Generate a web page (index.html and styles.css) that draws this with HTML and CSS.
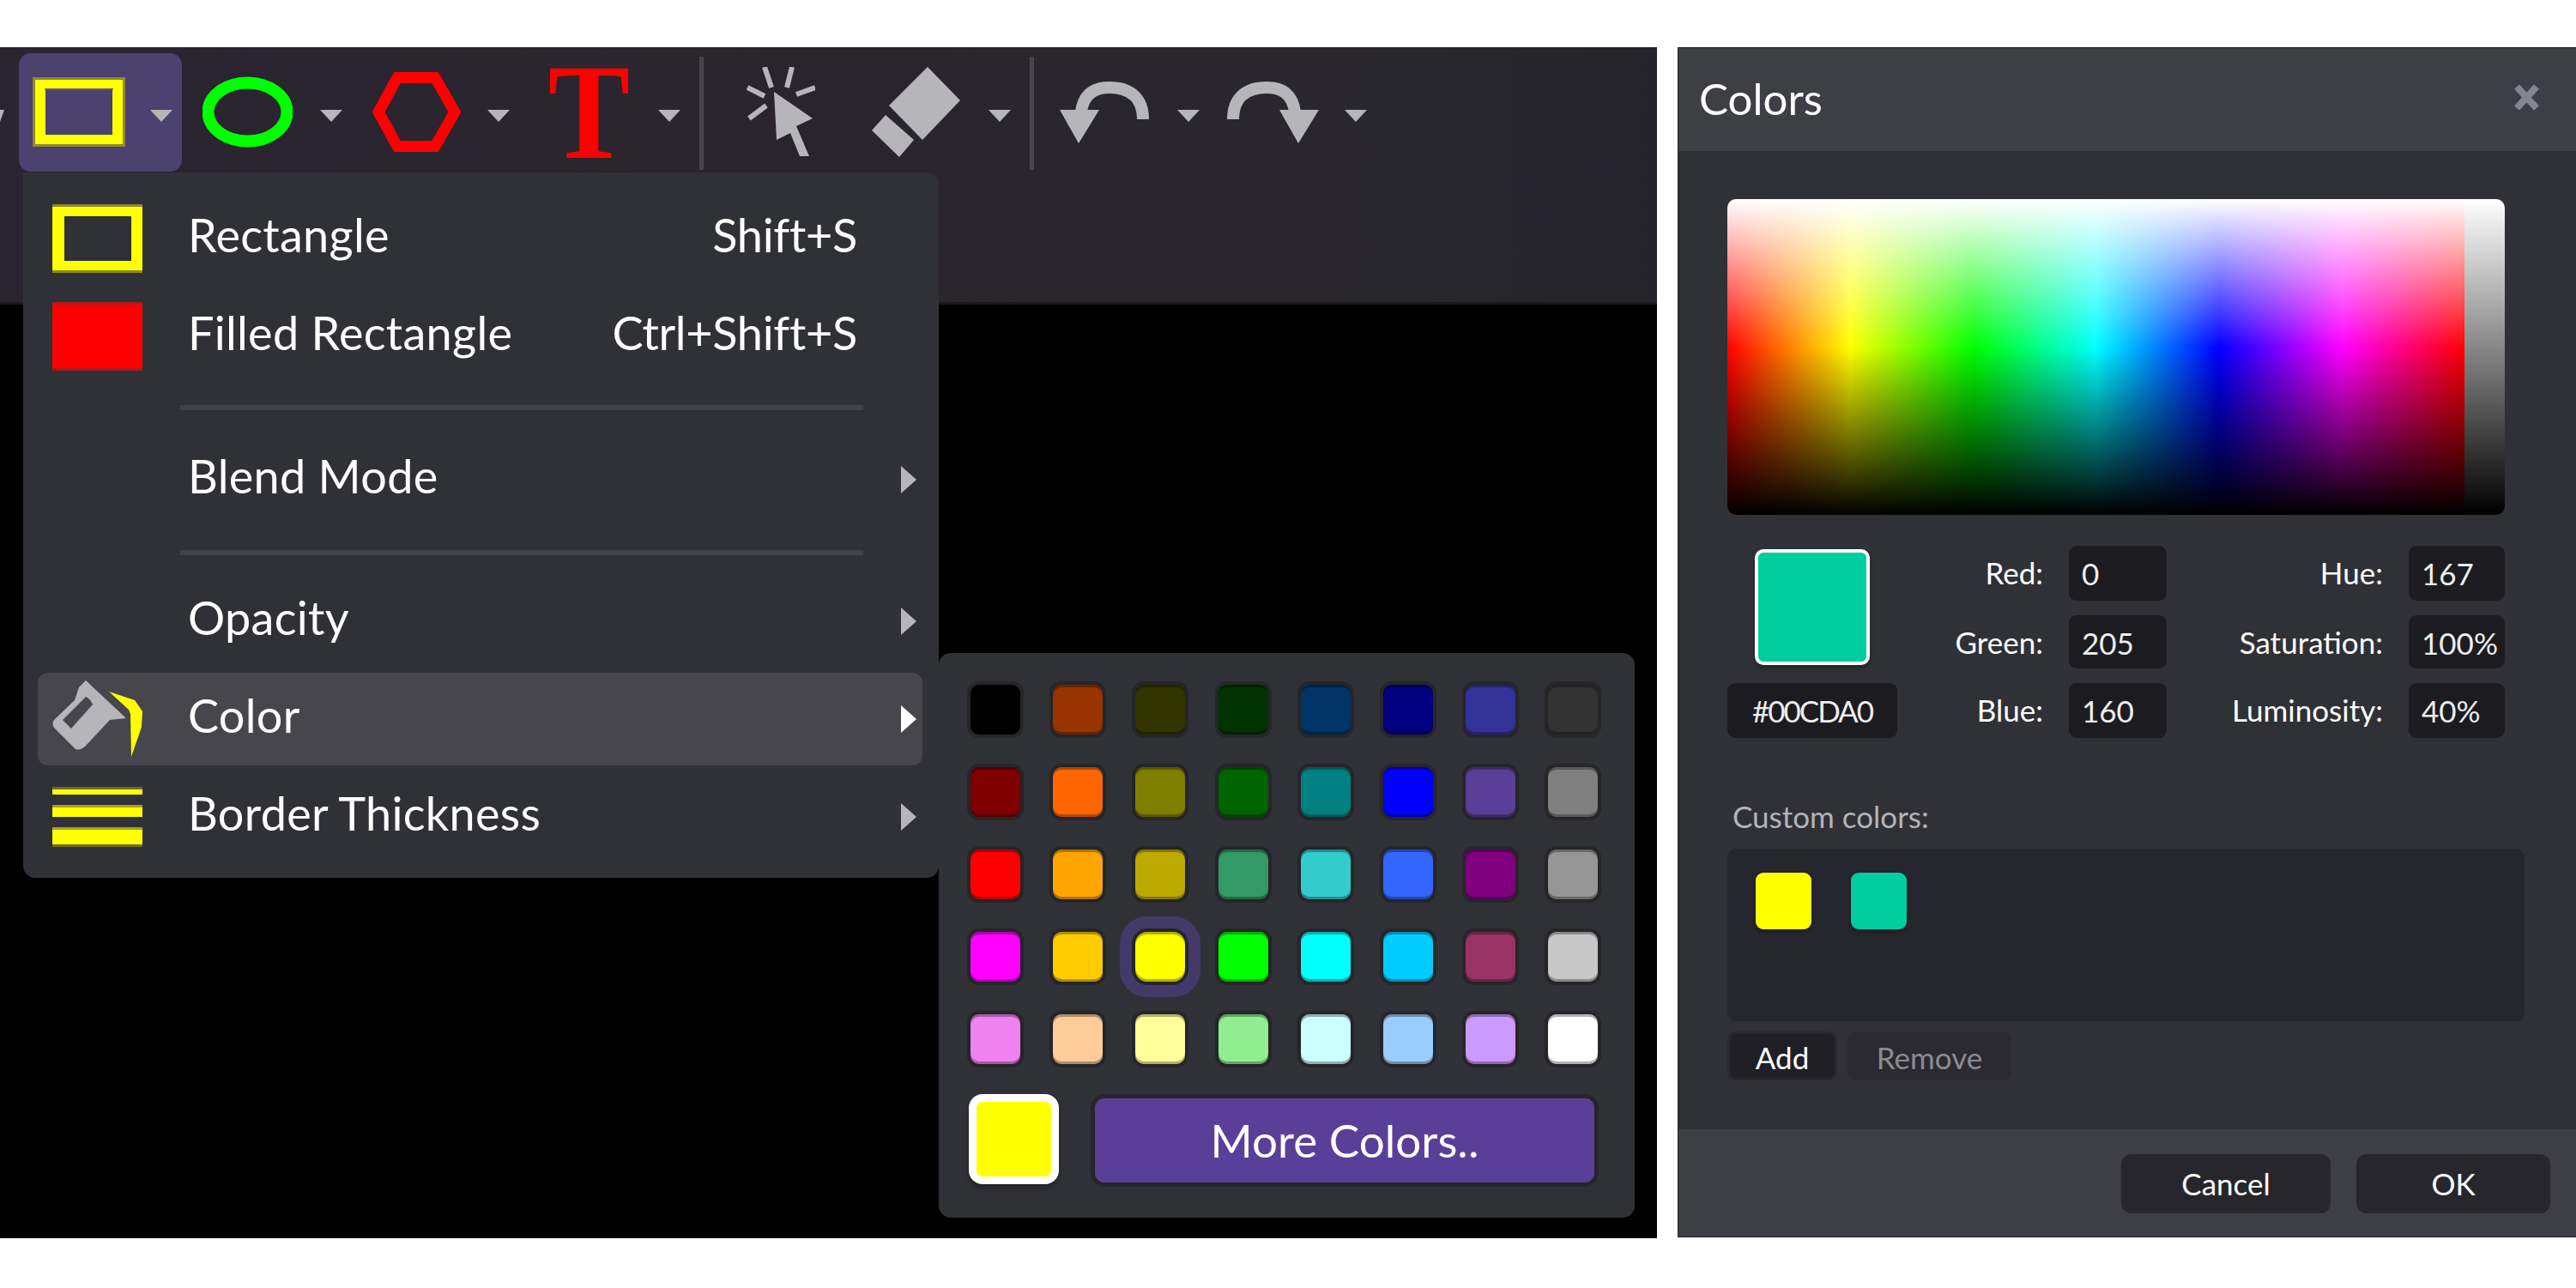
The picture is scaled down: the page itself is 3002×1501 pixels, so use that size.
FILE: index.html
```html
<!DOCTYPE html>
<html lang="en">
<head>
<meta charset="utf-8">
<title>Colors</title>
<link rel="stylesheet" href="styles.css">
</head>
<body>
<div class="page">
  <section class="editor">
    <div class="toolbar">
      <svg class="sliver" viewBox="0 0 5 14"><polygon class="gray" points="-8,0 5,0 0,14"/></svg>
      <div class="tool-active">
        <svg class="ic w108" viewBox="38 78 108 105">
          <path fill="#8c8a30" fill-rule="evenodd" d="M38 90H146V171H38ZM53 104V157H131V104Z"/>
          <path fill="#ffff00" fill-rule="evenodd" d="M41 93H143V168H41ZM53 104V157H131V104Z"/>
          <rect x="52" y="103" width="80" height="1.5" fill="#6f6860"/>
        </svg>
        <svg class="drop in-active" viewBox="0 0 26 14"><polygon class="gray" points="0,0 26,0 13,14"/></svg>
      </div>
      <svg class="ic w105 ell" viewBox="236 78 105 105"><ellipse cx="288.5" cy="130.5" rx="46" ry="34" class="line-g"/></svg>
      <svg class="drop d32" viewBox="0 0 26 14"><polygon class="gray" points="0,0 26,0 13,14"/></svg>
      <svg class="ic w103 m35" viewBox="435 78 103 105"><polygon points="464,90.5 508,90.5 531,130.5 508,170.5 464,170.5 442,130.5" class="line-r"/></svg>
      <svg class="drop d31" viewBox="0 0 26 14"><polygon class="gray" points="0,0 26,0 13,14"/></svg>
      <span class="tool-t">T</span>
      <svg class="drop d38" viewBox="0 0 26 14"><polygon class="gray" points="0,0 26,0 13,14"/></svg>
      <div class="vsep s22"></div>
      <svg class="ic w80 m50" viewBox="870 78 80 105">
        <polygon class="gray" points="902,107 947,138 928,147 943,182 932,182 921,155 905,163"/>
        <g class="ray"><line x1="891" y1="78" x2="899" y2="102"/><line x1="923" y1="78" x2="917" y2="102"/><line x1="871" y1="102" x2="891" y2="112"/><line x1="950" y1="102" x2="928" y2="110"/><line x1="893" y1="123" x2="873" y2="138"/></g>
      </svg>
      <svg class="ic w103 m66" viewBox="1016 78 103 105">
        <polygon class="gray" points="1081,78 1119,117 1075,163 1036,123"/>
        <polygon class="gray" points="1032,134 1065,163 1048,183 1016,152"/>
      </svg>
      <svg class="drop d33" viewBox="0 0 26 14"><polygon class="gray" points="0,0 26,0 13,14"/></svg>
      <div class="vsep s22"></div>
      <svg class="ic w104 m30" viewBox="1235 78 104 105">
        <path class="arc" d="M1332 139C1332 115 1318 102 1293 102C1275 102 1263 110 1260 130"/>
        <polygon class="gray" points="1235,128 1281,128 1257,167"/>
      </svg>
      <svg class="drop d33" viewBox="0 0 26 14"><polygon class="gray" points="0,0 26,0 13,14"/></svg>
      <svg class="ic w107 m32" viewBox="1429 78 107 105">
        <path class="arc" d="M1436 139C1436 115 1450 102 1475 102C1493 102 1505 110 1508 130"/>
        <polygon class="gray" points="1490,128 1536,128 1512,167"/>
      </svg>
      <svg class="drop d30" viewBox="0 0 26 14"><polygon class="gray" points="0,0 26,0 13,14"/></svg>
    </div>
    <div class="canvas"></div>

    <div class="menu">
      <div class="row">
        <svg class="mi" viewBox="0 0 105 80">
          <path fill="#8c8a30" fill-rule="evenodd" d="M0 0H105V80H0ZM14 14V66H92V14Z"/>
          <path fill="#ffff00" fill-rule="evenodd" d="M0 3H105V77H0ZM14 14V66H92V14Z"/>
        </svg>
        <span class="label">Rectangle</span><span class="key">Shift+S</span>
      </div>
      <div class="row">
        <svg class="mi" viewBox="0 0 105 80"><rect width="105" height="80" fill="#ff0000"/><rect width="105" height="3" fill="#a81a20"/><rect y="77" width="105" height="3" fill="#a81a20"/></svg>
        <span class="label">Filled Rectangle</span><span class="key">Ctrl+Shift+S</span>
      </div>
      <div class="msep one"></div>
      <div class="row">
        <span class="mi"></span><span class="label">Blend Mode</span>
        <svg class="sub" viewBox="0 0 18 32"><polygon class="gray" points="0,0 18,16 0,32"/></svg>
      </div>
      <div class="msep two"></div>
      <div class="row">
        <span class="mi"></span><span class="label">Opacity</span>
        <svg class="sub" viewBox="0 0 18 32"><polygon class="gray" points="0,0 18,16 0,32"/></svg>
      </div>
      <div class="row hover">
        <svg class="mi tall" viewBox="61 794 105 90">
          <path class="gray" fill-rule="evenodd" d="M100 794L147 838L128 840L99 871Q93 876 88 874L63 849Q60 844 63 840L87 817L92 802ZM100 813L73 840L83 850L108 822Q105 815 100 813Z"/>
          <path fill="#ffff00" d="M127 807L157 817L166 830L165 848L153 883L152 833L150 828Z"/>
        </svg>
        <span class="label">Color</span>
        <svg class="sub" viewBox="0 0 18 32"><polygon fill="#fff" points="0,0 18,16 0,32"/></svg>
      </div>
      <div class="row">
        <svg class="mi bars" viewBox="0 0 105 70">
          <rect y="0" width="105" height="3" fill="#6f6d24"/><rect y="3" width="105" height="6" fill="#ffff00"/>
          <rect y="21" width="105" height="3" fill="#a5a310"/><rect y="24" width="105" height="11" fill="#ffff00"/>
          <rect y="47" width="105" height="3" fill="#a5a310"/><rect y="50" width="105" height="17" fill="#ffff00"/><rect y="67" width="105" height="3" fill="#6f6d24"/>
        </svg>
        <span class="label">Border Thickness</span>
        <svg class="sub" viewBox="0 0 18 32"><polygon class="gray" points="0,0 18,16 0,32"/></svg>
      </div>
    </div>

    <div class="palette">
      <div class="swatches">
        <i class="sw" style="background:#000000"></i><i class="sw" style="background:#993300"></i><i class="sw" style="background:#333300"></i><i class="sw" style="background:#003300"></i><i class="sw" style="background:#003366"></i><i class="sw" style="background:#000080"></i><i class="sw" style="background:#333399"></i><i class="sw" style="background:#333333"></i>
        <i class="sw" style="background:#800000"></i><i class="sw" style="background:#ff6600"></i><i class="sw" style="background:#808000"></i><i class="sw" style="background:#006400"></i><i class="sw" style="background:#008080"></i><i class="sw" style="background:#0000ff"></i><i class="sw" style="background:#5a3f99"></i><i class="sw" style="background:#808080"></i>
        <i class="sw" style="background:#ff0000"></i><i class="sw" style="background:#ffa500"></i><i class="sw" style="background:#bdaa00"></i><i class="sw" style="background:#339966"></i><i class="sw" style="background:#33cccc"></i><i class="sw" style="background:#3366ff"></i><i class="sw" style="background:#800080"></i><i class="sw" style="background:#969696"></i>
        <i class="sw" style="background:#ff00ff"></i><i class="sw" style="background:#ffcc00"></i><i class="sw selected" style="background:#ffff00"></i><i class="sw" style="background:#00ff00"></i><i class="sw" style="background:#00ffff"></i><i class="sw" style="background:#00ccff"></i><i class="sw" style="background:#993366"></i><i class="sw" style="background:#c8c8c8"></i>
        <i class="sw" style="background:#ee82ee"></i><i class="sw" style="background:#ffcc99"></i><i class="sw" style="background:#ffff99"></i><i class="sw" style="background:#90ee90"></i><i class="sw" style="background:#ccffff"></i><i class="sw" style="background:#99ccff"></i><i class="sw" style="background:#cc99ff"></i><i class="sw" style="background:#ffffff"></i>
      </div>
      <div class="palette-foot">
        <div class="current"></div>
        <div class="more">More Colors..</div>
      </div>
    </div>
  </section>

  <section class="dialog">
    <header class="dlg-head">
      <span class="dlg-title">Colors</span>
      <svg class="close" viewBox="0 0 29 29"><path d="M3 2L26 27M26 2L3 27"/></svg>
    </header>
    <div class="dlg-body">
      <div class="picker"><div class="field"></div><div class="lum"></div></div>
      <div class="values">
        <div class="preview-cell"><div class="preview"></div></div>
        <label class="vl">Red:</label><div class="in">0</div>
        <label class="vl">Hue:</label><div class="in">167</div>
        <label class="vl">Green:</label><div class="in">205</div>
        <label class="vl">Saturation:</label><div class="in">100%</div>
        <div class="in hex">#00CDA0</div>
        <label class="vl">Blue:</label><div class="in">160</div>
        <label class="vl">Luminosity:</label><div class="in">40%</div>
      </div>
      <div class="custom-label">Custom colors:</div>
      <div class="custom">
        <i class="cc yellow"></i><i class="cc teal"></i>
      </div>
      <div class="custom-btns">
        <div class="btn add">Add</div>
        <div class="btn remove">Remove</div>
      </div>
    </div>
    <footer class="dlg-foot">
      <div class="btn2 cancel">Cancel</div>
      <div class="btn2 ok">OK</div>
    </footer>
  </section>
</div>
</body>
</html>
```
FILE: styles.css
```css
* { box-sizing: border-box; }
html, body { margin: 0; padding: 0; background: #fff; }
body { width: 3002px; height: 1501px; overflow: hidden; font-family: Lato, "Noto Sans", sans-serif; color: #fff; }
.page { display: flex; gap: 24px; padding-top: 55px; height: 1443px; }

/* left: editor */
.editor { position: relative; width: 1931px; height: 1388px; display: flex; flex-direction: column; background: #000; flex: none; }
.toolbar { height: 300px; flex: none; display: flex; align-items: flex-start; padding-top: 23px; border-bottom: 3px solid #19181c;
  background: linear-gradient(90deg, #292430 0%, #2a252d 50%, #29262e 80%, #25242d 100%); }
.canvas { flex: 1; background: #000; }
.gray { fill: #b5b5ba; }
.ic { height: 105px; flex: none; display: block; }
.w108 { width: 108px; } .w105 { width: 105px; } .w103 { width: 103px; } .w80 { width: 80px; } .w104 { width: 104px; } .w107 { width: 107px; }
.sliver { width: 5px; height: 14px; margin-top: 50px; margin-right: 17px; flex: none; }
.tool-active { width: 190px; height: 138px; margin-top: -16px; padding: 16px 0 0 16px; background: #4b4270; border-radius: 14px; display: flex; align-items: flex-start; flex: none; }
.drop { width: 26px; height: 14px; flex: none; margin-top: 50px; display: block; }
.in-active { margin-left: 29px; }
.ell { margin-left: 24px; }
.d32 { margin-left: 32px; } .d31 { margin-left: 31px; } .d38 { margin-left: 38px; } .d33 { margin-left: 33px; } .d30 { margin-left: 30px; }
.m35 { margin-left: 35px; } .m50 { margin-left: 50px; } .m66 { margin-left: 66px; } .m30 { margin-left: 30px; } .m32 { margin-left: 32px; }
.line-g { fill: none; stroke: #00ff00; stroke-width: 14; }
.line-r { fill: none; stroke: #ff0000; stroke-width: 13; }
.ray line { stroke: #b5b5ba; stroke-width: 6; }
.arc { fill: none; stroke: #b5b5ba; stroke-width: 14; }
.tool-t { width: 93px; height: 105px; margin-left: 40px; margin-right: 2px; flex: none; display: block; text-align: center; font: bold 159px/105px "Liberation Serif", serif; color: #ff0000; transform: scaleX(.9); }
.vsep { width: 5px; height: 132px; margin-top: -12px; background: #45454a; flex: none; }
.s22 { margin-left: 22px; }

/* shape menu */
.menu { position: absolute; left: 27px; top: 146px; width: 1067px; height: 822px; padding: 23px 19px 17px 17px; background: #303136; border-radius: 0 14px 14px 14px; display: flex; flex-direction: column; gap: 6px; }
.row { height: 108px; flex: none; display: flex; align-items: center; padding-left: 17px; border-radius: 12px; font-size: 54px; letter-spacing: .3px; line-height: 100px; padding-bottom: 8px; }
.row.hover { background: #47464c; }
.mi { width: 105px; height: 80px; flex: none; margin-right: 53px; display: block; margin-top: 8px; }
.mi.tall { height: 90px; }
.mi.bars { height: 70px; }
.key { margin-left: auto; padding-right: 76px; letter-spacing: -.3px; }
.sub { width: 18px; height: 32px; margin-left: auto; margin-right: 7px; flex: none; margin-top: 8px; }
.msep { height: 6px; width: 796px; margin-left: 166px; background: #414148; flex: none; }
.msep.one { margin-top: 20px; margin-bottom: 21px; }
.msep.two { margin-top: 22px; margin-bottom: 17px; }

/* color palette */
.palette { position: absolute; left: 1094px; top: 706px; width: 811px; height: 658px; padding: 33px 33px 0; background: #303136; border-radius: 14px; }
.swatches { display: grid; grid-template-columns: repeat(8, 66px); grid-auto-rows: 66px; column-gap: 30.2px; row-gap: 30px; }
.sw { display: block; border: 4px solid #25252a; border-radius: 14px; background-clip: padding-box; box-shadow: inset 0 3px 0 rgba(0,0,0,.3), inset 0 -3px 0 rgba(0,0,0,.3); }
.sw.selected { outline: 14px solid #443a6a; outline-offset: 0; border-radius: 18px; }
.palette-foot { display: flex; margin-top: 31px; }
.current { width: 105px; height: 105px; margin-left: 2px; border: 9px solid #fff; border-radius: 16px; background: #ffff00; box-shadow: 0 5px 5px rgba(0,0,0,.25); flex: none; }
.more { width: 592px; height: 108px; margin-left: 37px; background: #5a3f99; border: 5px solid #26252e; border-radius: 16px; font-size: 53px; line-height: 98px; text-align: center; flex: none; }

/* right: dialog */
.dialog { flex: 1; height: 1387px; display: flex; flex-direction: column; border: 1px solid #222226; border-right: none; background: #303136; }
.dlg-head { height: 120px; flex: none; background: #3e3e47; display: flex; align-items: center; justify-content: space-between; padding: 0 43px 0 24px; }
.dlg-title { font-size: 51px; line-height: 50px; margin-top: -3px; }
.close { width: 29px; height: 29px; margin-top: -6px; }
.close path { fill: none; stroke: #85858f; stroke-width: 8; }
.dlg-body { flex: 1; padding: 56px 0 0 57px; }
.picker { width: 906px; height: 368px; display: flex; border-radius: 10px; overflow: hidden; }
.field { flex: 1; background:
  linear-gradient(180deg, #fff 0%, rgba(255,255,255,0) 47%, rgba(0,0,0,0) 47%, #000 100%),
  linear-gradient(90deg, #f00 0%, #ff0 16.67%, #0f0 33.33%, #0ff 50%, #00f 66.67%, #f0f 83.33%, #f00 100%); }
.lum { width: 47px; background: linear-gradient(180deg, #fff, #000); }
.values { display: grid; width: 906px; margin-top: 36px; grid-template-columns: 198px 200px 114px 282px 112px; grid-template-rows: 64px 62px 64px; row-gap: 17px; font-size: 35px; }
.preview-cell { grid-row: 1 / span 2; display: flex; justify-content: center; padding-top: 4px; }
.preview { width: 134px; height: 135px; border: 4px solid #fff; border-radius: 10px; background: #00cda0; box-shadow: 0 3px 5px rgba(0,0,0,.3); }
.vl { text-align: right; padding-right: 30px; line-height: 63px; color: #fff; }
.in { background: #1c1c20; border-radius: 9px; padding-left: 15px; line-height: 65px; color: #eee; }
.hex { padding-left: 0; text-align: center; letter-spacing: -2px; }
.custom-label { margin: 66px 0 13px 6px; font-size: 35px; line-height: 50px; color: #b4b4b8; }
.custom { width: 929px; height: 201px; padding: 28px 33px; background: #26262f; border-radius: 10px; display: flex; gap: 46px; align-items: flex-start; }
.cc { display: block; width: 65px; height: 66px; border-radius: 9px; box-shadow: 0 3px 4px rgba(0,0,0,.25); }
.yellow { background: #ffff00; }
.teal { background: #00cda0; }
.custom-btns { display: flex; gap: 12px; margin-top: 12px; font-size: 35px; }
.btn { height: 57px; line-height: 60px; border-radius: 10px; text-align: center; }
.add { width: 128px; background: #1f1f25; border: 3px solid #28282d; line-height: 55px; }
.remove { width: 191px; background: #2a2a30; color: #8c8c90; }
.dlg-foot { height: 125px; flex: none; background: #3e3e47; display: flex; justify-content: flex-end; gap: 30px; padding: 29px 30px 0 0; font-size: 35px; }
.btn2 { height: 69px; line-height: 68px; border-radius: 12px; background: #26262c; text-align: center; }
.cancel { width: 244px; }
.ok { width: 226px; }
```
